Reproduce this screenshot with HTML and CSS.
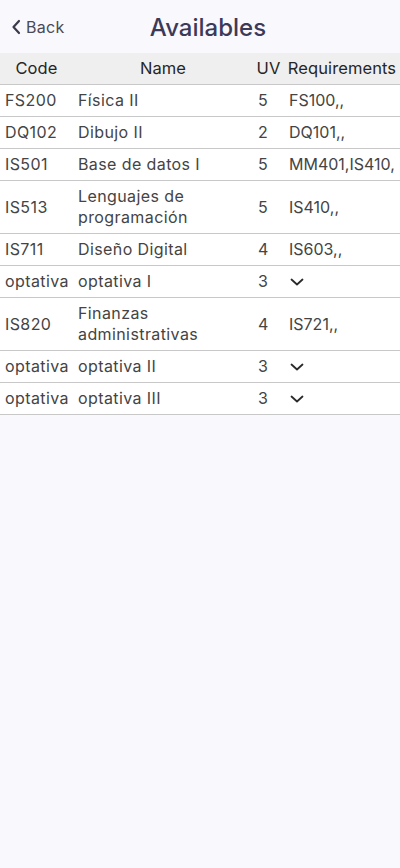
FILE: index.html
```html
<!DOCTYPE html>
<html lang="es">
<head>
<meta charset="utf-8">
<link rel="stylesheet" href="styles.css">
</head>
<body>
<header class="topbar">
  <a class="back">
    <svg class="back-icon" width="10" height="16" viewBox="0 0 10 16"><path d="M8 2 L2.5 8 L8 14" fill="none" stroke="#3a3a4a" stroke-width="2.2" stroke-linecap="round" stroke-linejoin="round"/></svg>
    <span>Back</span>
  </a>
  <h1 class="title">Availables</h1>
</header>
<table class="grid">
  <colgroup>
    <col class="c-code">
    <col class="c-name">
    <col class="c-uv">
    <col class="c-req">
  </colgroup>
  <thead>
    <tr><th>Code</th><th>Name</th><th>UV</th><th>Requirements</th></tr>
  </thead>
  <tbody>
    <tr><td>FS200</td><td>Física II</td><td>5</td><td>FS100,,</td></tr>
    <tr><td>DQ102</td><td>Dibujo II</td><td>2</td><td>DQ101,,</td></tr>
    <tr><td>IS501</td><td>Base de datos I</td><td>5</td><td>MM401,IS410,</td></tr>
    <tr><td>IS513</td><td>Lenguajes de programación</td><td>5</td><td>IS410,,</td></tr>
    <tr><td>IS711</td><td>Diseño Digital</td><td>4</td><td>IS603,,</td></tr>
    <tr><td>optativa</td><td>optativa I</td><td>3</td><td><svg class="chev" width="14" height="10" viewBox="0 0 14 10"><path d="M1.5 2.5 L7 7.5 L12.5 2.5" fill="none" stroke="#2a2a2a" stroke-width="1.8" stroke-linecap="round" stroke-linejoin="round"/></svg></td></tr>
    <tr><td>IS820</td><td>Finanzas administrativas</td><td>4</td><td>IS721,,</td></tr>
    <tr><td>optativa</td><td>optativa II</td><td>3</td><td><svg class="chev" width="14" height="10" viewBox="0 0 14 10"><path d="M1.5 2.5 L7 7.5 L12.5 2.5" fill="none" stroke="#2a2a2a" stroke-width="1.8" stroke-linecap="round" stroke-linejoin="round"/></svg></td></tr>
    <tr><td>optativa</td><td>optativa III</td><td>3</td><td><svg class="chev" width="14" height="10" viewBox="0 0 14 10"><path d="M1.5 2.5 L7 7.5 L12.5 2.5" fill="none" stroke="#2a2a2a" stroke-width="1.8" stroke-linecap="round" stroke-linejoin="round"/></svg></td></tr>
  </tbody>
</table>
</body>
</html>
```
FILE: styles.css
```css
html, body {
  margin: 0;
  padding: 0;
  background: #f9f8fd;
  font-family: "Inter", "Noto Sans", sans-serif;
  color: #3c3c3c;
}
.topbar {
  position: relative;
  height: 53px;
  display: flex;
  align-items: center;
  justify-content: center;
}
.back {
  position: absolute;
  left: 11px;
  top: 17px;
  display: flex;
  align-items: center;
  gap: 5px;
  font-size: 16px;
  color: #4a4a55;
  letter-spacing: 0.3px;
}
.back-icon { display: block; }
.title {
  margin: 0;
  font-size: 24px;
  font-weight: 500;
  color: #3b3a5a;
  padding-left: 16px;
  padding-top: 2px;
}
.grid {
  width: 100%;
  table-layout: fixed;
  border-collapse: collapse;
  font-size: 16px;
}
.c-code { width: 73px; }
.c-name { width: 180px; }
.c-uv { width: 31px; }
.c-req { width: 116px; }
.grid thead tr {
  background: #efefef;
}
.grid th {
  font-weight: 400;
  font-size: 16.5px;
  color: #262626;
  padding: 5px 0;
  line-height: 21px;
  text-align: center;
  border-bottom: 1px solid #c8c8c8;
  white-space: nowrap;
  letter-spacing: 0.1px;
}
.grid tbody tr {
  background: #ffffff;
}
.grid td {
  padding: 5px;
  line-height: 21px;
  text-align: left;
  border-bottom: 1px solid #c8c8c8;
  color: #444444;
  vertical-align: middle;
  letter-spacing: 0.4px;
  white-space: nowrap;
}
.grid td:nth-child(2) { white-space: normal; }
.grid td:nth-child(4) { letter-spacing: 0; }
.chev { display: block; margin-left: 1px; }
```
